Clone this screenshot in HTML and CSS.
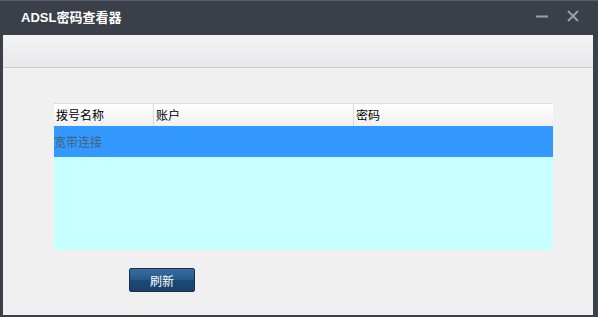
FILE: index.html
```html
<!DOCTYPE html>
<html lang="zh-CN">
<head>
  <meta charset="UTF-8" />
  <title>ADSL密码查看器</title>
  <link rel="stylesheet" href="styles.css">
</head>
<body>
  <div class="window">
    <div class="titlebar">
      <span class="title">ADSL密码查看器</span>
      <div class="controls">
        <svg class="ctrl" width="14" height="14" viewBox="0 0 14 14"><path d="M1 7.5h12" stroke="#9aa0a8" stroke-width="2"/></svg>
        <svg class="ctrl" width="14" height="14" viewBox="0 0 14 14"><path d="M2 2l10 10M12 2L2 12" stroke="#9aa0a8" stroke-width="2"/></svg>
      </div>
    </div>
    <div class="band"></div>
    <div class="content">
      <div class="grid">
        <div class="grid-head">
          <div class="col c1">拨号名称</div>
          <div class="col c2">账户</div>
          <div class="col c3">密码</div>
        </div>
        <div class="row selected">
          <div class="cell c1">宽带连接</div>
          <div class="cell c2"></div>
          <div class="cell c3"></div>
        </div>
      </div>
      <button class="refresh">刷新</button>
    </div>
  </div>
</body>
</html>
```

FILE: styles.css
```css
html, body {
  margin: 0;
  padding: 0;
  background: #3a3f4a;
}

body {
  font-family: "Noto Sans CJK SC", "Liberation Sans", sans-serif;
  font-size: 12px;
}

.window {
  width: 598px;
  height: 317px;
  box-sizing: border-box;
  background: #3a3f4a;
  border-top: 1px solid #5a6068;
  padding: 0 5px 2px 3px;
  display: flex;
  flex-direction: column;
}

.titlebar {
  height: 34px;
  display: flex;
  align-items: center;
  justify-content: space-between;
  color: #fff;
}

.title {
  font-family: "Liberation Sans", "Noto Sans CJK SC", sans-serif;
  font-weight: bold;
  font-size: 13px;
  padding-left: 18px;
  margin-top: -4px;
}

.controls {
  display: flex;
  gap: 17px;
  padding-right: 13px;
  margin-top: -4px;
}

.band {
  height: 32px;
  background: linear-gradient(#f4f4f6, #e8e8ec);
  border-bottom: 1px solid #c4ccd8;
}

.content {
  flex: 1;
  background: #f0f0f0;
  padding: 35px 0 0 51px;
}

.grid {
  width: 499px;
  height: 147px;
  background: #c8ffff;
}

.grid-head {
  height: 22px;
  display: flex;
  background: linear-gradient(#ffffff, #f0f0f0);
  border-top: 1px solid #dcdcdc;
}

.col {
  line-height: 21px;
  padding-left: 2px;
  color: #000;
  border-right: 1px solid #d8d8d8;
  box-sizing: border-box;
}

.c1 { width: 100px; }
.c2 { width: 200px; }
.c3 { flex: 1; border-right: none; }

.row {
  height: 31px;
  display: flex;
}

.row.selected {
  background: #3399ff;
}

.cell {
  line-height: 31px;
  color: #4a5f7a;
  box-sizing: border-box;
}

.refresh {
  margin: 18px 0 0 75px;
  width: 66px;
  height: 24px;
  border: 1px solid #1a2f48;
  border-radius: 2px;
  background: linear-gradient(#3a6ea0, #24578a 50%, #1c4a78 51%, #1a406a);
  color: #fff;
  font-family: "Noto Sans CJK SC", sans-serif;
  font-size: 12px;
  padding: 0;
}
```
